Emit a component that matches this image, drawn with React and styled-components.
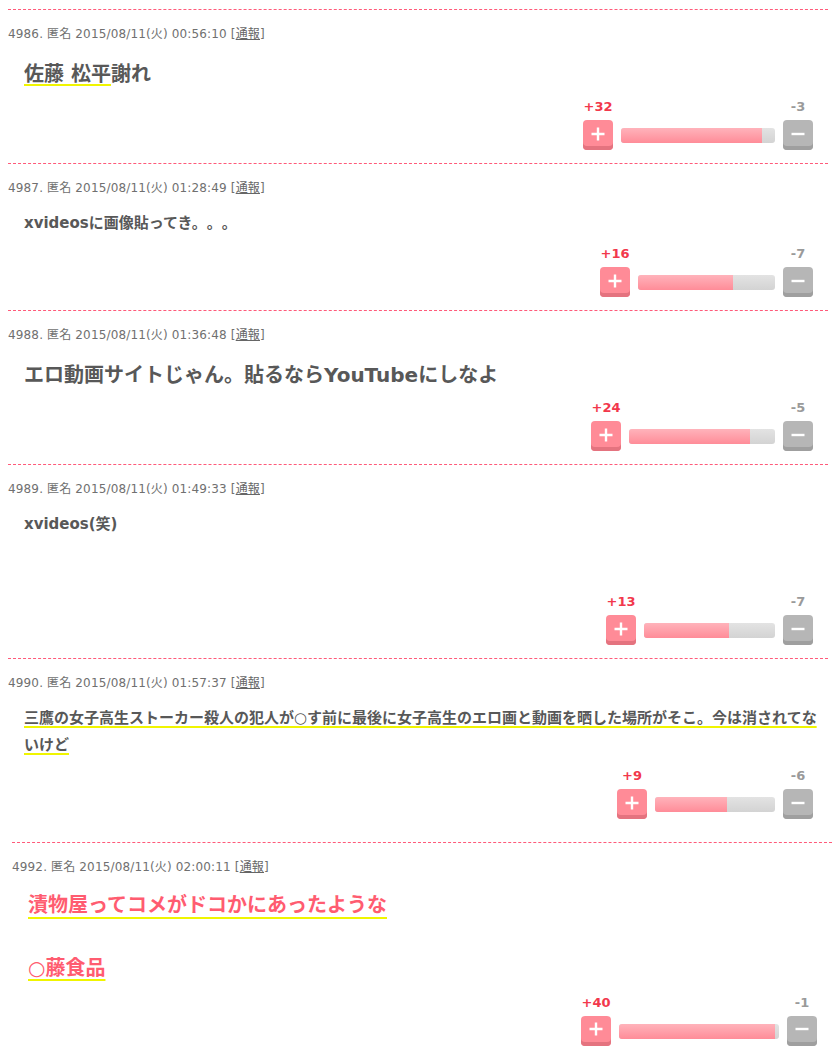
import React from 'react';
import styled, { createGlobalStyle, css } from 'styled-components';

const GlobalStyle = createGlobalStyle`
  html, body { margin: 0; padding: 0; background: #fff; }
  body {
    font-family: "DejaVu Sans", "Noto Sans CJK JP", sans-serif;
    text-spacing-trim: space-all;
  }
`;

const Page = styled.div`
  padding: 9px 0 20px 8px;
`;

const Thread = styled.section`
  width: 820px;
`;

const NewThread = styled.section`
  width: 820px;
  margin: 10px 0 0 4px;
`;

const Item = styled.article`
  border-top: 1px dashed #ff5a7a;
  padding: 16px 0 13px;
`;

const Meta = styled.div`
  font-size: 12px;
  line-height: 16px;
  letter-spacing: 0.15px;
  color: #707070;
  white-space: nowrap;
`;

const Report = styled.a`
  color: #666;
  text-decoration: underline;
  cursor: pointer;
`;

const sizes = {
  small: css`
    font-size: 15px;
    line-height: 27px;
    margin: 14px 0 9px;
    color: #585858;
  `,
  large: css`
    font-size: 20px;
    line-height: 36px;
    margin: 14px 0 7px;
    color: #585858;
  `,
  pink: css`
    font-size: 20px;
    line-height: 31.5px;
    margin: 15px 0 10px;
    color: #ff5c70;
  `,
};

const Body = styled.div`
  padding-left: 16px;
  font-weight: 700;
  text-spacing-trim: space-all;
  ${(p) => sizes[p.$size]}
`;

const Marker = styled.span`
  text-decoration-line: underline;
  text-decoration-color: #f0f500;
  text-decoration-thickness: 2px;
  text-underline-offset: ${(p) => p.$offset}px;
  text-decoration-skip-ink: none;
`;

const Spacer = styled.div`
  height: ${(p) => p.$h}px;
`;

const Votes = styled.div`
  display: flex;
  justify-content: flex-end;
  align-items: flex-end;
  padding-right: 15px;
`;

const VoteSide = styled.div`
  display: flex;
  flex-direction: column;
  align-items: center;
  gap: 5px;
  width: 30px;
`;

const Count = styled.span`
  font-size: 13px;
  line-height: 16px;
  font-weight: 700;
  color: ${(p) => (p.$up ? '#f2384c' : '#9a9a9a')};
  white-space: nowrap;
`;

const VoteButton = styled.button`
  width: 30px;
  height: 30px;
  border: 0;
  border-radius: 4px;
  padding: 0 0 3px;
  display: flex;
  align-items: center;
  justify-content: center;
  cursor: pointer;
  background: ${(p) => (p.$up ? '#ff8b97' : '#b6b6b6')};
  box-shadow: inset 0 -4px 0 ${(p) => (p.$up ? '#e4737f' : '#9f9f9f')};
`;

const Bar = styled.div`
  height: 15px;
  margin: 0 8px 7px;
  border-radius: 3px;
  background: linear-gradient(#e3e3e3, #d3d3d3);
  overflow: hidden;
`;

const Fill = styled.div`
  height: 100%;
  background: linear-gradient(#ffb3bb, #ff8c98);
`;

const PlusIcon = () => (
  <svg width="14" height="14" viewBox="0 0 14 14">
    <path d="M7 0.5v13M0.5 7h13" stroke="#fff" strokeWidth="2.4" fill="none" />
  </svg>
);

const MinusIcon = () => (
  <svg width="14" height="14" viewBox="0 0 14 14">
    <path d="M0.5 7h13" stroke="#fff" strokeWidth="2.4" fill="none" />
  </svg>
);

const VoteBar = ({ plus, minus, width }) => {
  const pct = (plus / (plus + minus)) * 100;
  return (
    <Votes>
      <VoteSide>
        <Count $up>+{plus}</Count>
        <VoteButton $up aria-label="plus">
          <PlusIcon />
        </VoteButton>
      </VoteSide>
      <Bar style={{ width }}>
        <Fill style={{ width: `${pct}%` }} />
      </Bar>
      <VoteSide>
        <Count>-{minus}</Count>
        <VoteButton aria-label="minus">
          <MinusIcon />
        </VoteButton>
      </VoteSide>
    </Votes>
  );
};

const Comment = ({ no, time, size, children, plus, minus, barWidth }) => (
  <Item>
    <Meta>
      {no}. 匿名 2015/08/11(火) {time} [<Report>通報</Report>]
    </Meta>
    <Body $size={size}>{children}</Body>
    <VoteBar plus={plus} minus={minus} width={barWidth} />
  </Item>
);

export default function App() {
  return (
    <>
      <GlobalStyle />
      <Page>
        <Thread>
          <Comment no={4986} time="00:56:10" size="large" plus={32} minus={3} barWidth={154}>
            <Marker $offset={3}>佐藤 松平</Marker>謝れ
          </Comment>
          <Comment no={4987} time="01:28:49" size="small" plus={16} minus={7} barWidth={137}>
            xvideosに画像貼ってき。。。
          </Comment>
          <Comment no={4988} time="01:36:48" size="large" plus={24} minus={5} barWidth={146}>
            エロ動画サイトじゃん。貼るならYouTubeにしなよ
          </Comment>
          <Comment no={4989} time="01:49:33" size="small" plus={13} minus={7} barWidth={131}>
            xvideos(笑)
            <Spacer $h={47} />
          </Comment>
          <Comment no={4990} time="01:57:37" size="small" plus={9} minus={6} barWidth={120}>
            <Marker $offset={3}>
              三鷹の女子高生ストーカー殺人の犯人が○す前に最後に女子高生のエロ画と動画を晒した場所がそこ。今は消されてないけど
            </Marker>
          </Comment>
        </Thread>
        <NewThread>
          <Comment no={4992} time="02:00:11" size="pink" plus={40} minus={1} barWidth={160}>
            <Marker $offset={5}>漬物屋ってコメがドコかにあったような</Marker>
            <br />
            <br />
            <Marker $offset={4}>○藤食品</Marker>
          </Comment>
        </NewThread>
      </Page>
    </>
  );
}
